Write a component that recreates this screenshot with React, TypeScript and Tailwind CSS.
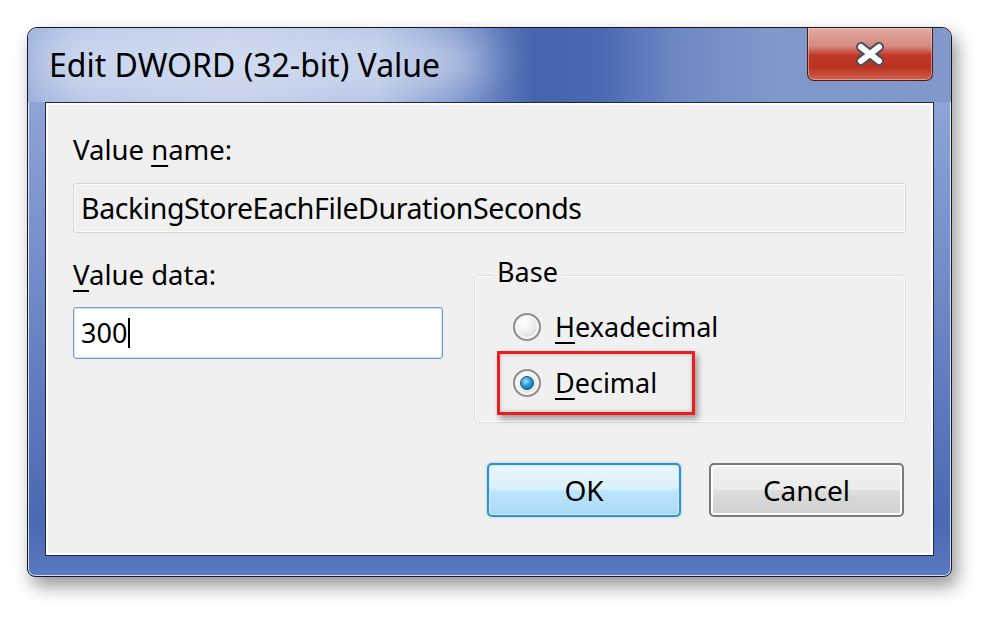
import React from "react"

const font = { fontFamily: '"Noto Sans", "Open Sans", Arial, sans-serif' }

function Radio({ checked }: { checked?: boolean }) {
  return (
    <span className="relative flex h-[28px] w-[28px] shrink-0 items-center justify-center rounded-full border-[2px] border-[#8f8f8f] bg-[radial-gradient(circle_at_35%_30%,#ffffff_0%,#eeeeee_45%,#cfcfcf_100%)] shadow-[inset_0_0_0_2px_#f6f6f6]">
      {checked && (
        <span className="h-[14px] w-[14px] rounded-full border border-[#1d4f7d] bg-[radial-gradient(circle_at_40%_35%,#9fe0ff_0%,#2a9ad8_45%,#0d4f86_100%)]" />
      )}
    </span>
  )
}

export default function App() {
  return (
    <div className="min-h-[624px] w-[1000px] bg-white pl-[27px] pt-[27px]" style={font}>
      <div className="flex h-[550px] w-[925px] flex-col overflow-hidden rounded-t-[10px] rounded-b-[8px] border border-[#151a26] bg-[linear-gradient(to_bottom,#9aaedb_0%,#7790cb_40%,#4a69b3_90%,#5a79c0_100%)] shadow-[5px_9px_18px_rgba(0,0,0,0.42),inset_0_0_0_1px_rgba(255,255,255,0.75)]">
        {/* title bar */}
        <div className="relative flex h-[74px] shrink-0 items-start overflow-hidden bg-[linear-gradient(to_right,#98acda_0%,#b5c4e6_6%,#c2cfeb_22%,#b0c0e3_38%,#6b85c3_48%,#4464ae_55%,#4a69b2_62%,#6d87c3_70%,#7f97c9_80%,#8399cb_100%)]">
          <div className="pointer-events-none absolute left-[0px] top-[10px] h-[48px] w-[460px] rounded-full bg-[#dbe4f4] opacity-80 blur-xl" />
          <span className="relative ml-[21px] mt-[16px] text-[32px] leading-[42px] text-black">
            Edit DWORD (32-bit) Value
          </span>
          <div className="relative ml-auto mr-[18px] flex h-[53px] w-[126px] items-center justify-center rounded-b-[7px] border border-t-0 border-[#4a1f18] bg-[linear-gradient(to_bottom,#e4aaa1_0%,#d48a7f_35%,#c2392a_52%,#b8321f_75%,#d0614f_100%)] shadow-[inset_0_0_0_1px_rgba(255,220,210,0.45)]">
            <svg width="36" height="28" viewBox="0 0 36 28">
              <path d="M9 7 L27 21 M27 7 L9 21" stroke="#4a505c" strokeWidth="10" strokeLinecap="round" />
              <path d="M9 7 L27 21 M27 7 L9 21" stroke="#ffffff" strokeWidth="6" strokeLinecap="round" />
            </svg>
          </div>
        </div>

        {/* client area */}
        <div className="flex-1 px-[17px] pb-[20px]">
          <div className="flex h-full flex-col border border-[#1e2a44] bg-[#f0f0f0] px-[27px] shadow-[inset_0_0_0_2px_#ffffff]">
            <div className="mt-[29px] text-[27.5px] leading-[36px] text-black">
              Value <span className="underline underline-offset-[5px] decoration-[2px]">n</span>ame:
            </div>
            <div className="mt-[15px] flex h-[50px] items-center rounded-[3px] border border-[#d8d8d8] bg-[#f0f0f0] px-[7px] text-[28.5px] tracking-[-0.4px] text-black shadow-[inset_0_0_0_1px_#fbfbfb]">
              BackingStoreEachFileDurationSeconds
            </div>

            <div className="mt-[24px] flex">
              <div className="flex w-[370px] flex-col">
                <div className="text-[27.5px] leading-[36px] text-black">
                  <span className="underline underline-offset-[5px] decoration-[2px]">V</span>alue data:
                </div>
                <div className="mt-[14px] flex h-[52px] items-center rounded-[3px] border border-[#6d9dc8] bg-white px-[7px] text-[27px] text-black shadow-[inset_0_0_0_1px_#cfe3f4]">
                  300
                  <span className="ml-[1px] h-[30px] w-[2px] bg-black" />
                </div>
              </div>

              <div className="relative ml-auto mt-[18px] h-[148px] w-[432px] rounded-[5px] border border-[#d5dfe5] shadow-[inset_0_0_0_1px_#ffffff]">
                <span className="absolute left-[18px] top-[-22px] bg-[#f0f0f0] px-[4px] text-[27px] leading-[36px] text-black">
                  Base
                </span>
                <div className="ml-[38px] mt-[33px] flex items-center gap-[14px] text-[27px] leading-[36px] text-black">
                  <Radio />
                  <span>
                    <span className="underline underline-offset-[5px] decoration-[2px]">H</span>exadecimal
                  </span>
                </div>
                <div className="ml-[22px] mt-[6px] flex h-[64px] w-[198px] items-center gap-[14px] border-[3px] border-[#ee1c1c] pl-[13px] text-[27px] leading-[36px] text-black shadow-[3px_4px_6px_rgba(0,0,0,0.35),inset_0_0_4px_rgba(0,0,0,0.25)]">
                  <Radio checked />
                  <span>
                    <span className="underline underline-offset-[5px] decoration-[2px]">D</span>ecimal
                  </span>
                </div>
              </div>
            </div>

            <div className="mt-[40px] flex justify-end gap-[28px] pr-[2px]">
              <button className="flex h-[54px] w-[194px] items-center justify-center rounded-[5px] border-[2px] border-[#3c8fc6] bg-[linear-gradient(to_bottom,#eaf6fd_0%,#d9f0fc_48%,#bee6fd_52%,#a7d9f5_100%)] text-[28px] text-black shadow-[0_0_3px_#6fd3ff,inset_0_0_0_1px_#c8f0ff]">
                OK
              </button>
              <button className="flex h-[54px] w-[195px] items-center justify-center rounded-[5px] border-[2px] border-[#7a7a7a] bg-[linear-gradient(to_bottom,#f2f2f2_0%,#ebebeb_48%,#dddddd_52%,#cfcfcf_100%)] text-[28px] text-black shadow-[inset_0_0_0_2px_#fcfcfc]">
                Cancel
              </button>
            </div>
          </div>
        </div>
      </div>
    </div>
  )
}
